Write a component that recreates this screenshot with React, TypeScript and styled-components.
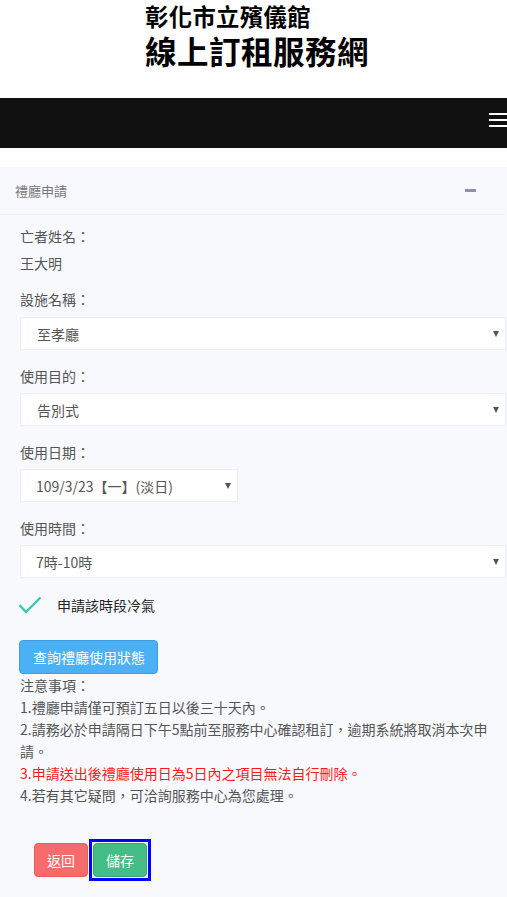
import React from "react";
import styled, { createGlobalStyle } from "styled-components";

const GlobalStyle = createGlobalStyle`
  html, body {
    margin: 0;
    padding: 0;
    background: #fff;
    font-family: "Noto Sans CJK TC", "Noto Sans", sans-serif;
  }
  * { box-sizing: border-box; }
`;

const Header = styled.header`
  height: 98px;
  padding: 1px 0 0 145px;
  background: #fff;
`;

const SiteName = styled.div`
  font-size: 23.3px;
  font-weight: 700;
  line-height: 31px;
  color: #000;
  letter-spacing: 0.4px;
`;

const SiteTitle = styled.div`
  font-size: 31.5px;
  font-weight: 700;
  line-height: 36px;
  color: #000;
  letter-spacing: 0.5px;
`;

const NavBar = styled.nav`
  height: 50px;
  background: #111;
  display: flex;
  justify-content: flex-end;
  align-items: center;
`;

const Burger = styled.div`
  width: 18px;
  display: flex;
  flex-direction: column;
  gap: 4px;
  margin-top: -7px;

  span {
    display: block;
    height: 2px;
    background: #fff;
  }
`;

const Main = styled.main`
  padding-top: 19px;
  background: #fff;
`;

const Panel = styled.section`
  background: #f7f9fd;
  min-height: 730px;
`;

const PanelHead = styled.div`
  height: 48px;
  padding: 0 29px 0 15px;
  display: flex;
  align-items: center;
  justify-content: space-between;
  border-bottom: 1px solid #eef0f5;
  margin-right: 2px;
`;

const PanelTitle = styled.span`
  font-size: 13px;
  color: #777;
`;

const Minus = styled.span`
  width: 11px;
  height: 3px;
  background: #8a93a6;
`;

const PanelBody = styled.div`
  padding: 10px 0 0 20px;
`;

const Label = styled.div<{ $gap?: number }>`
  font-size: 14px;
  line-height: 22px;
  color: #555;
  margin-bottom: ${({ $gap }) => ($gap ?? 6)}px;
`;

const Value = styled.div`
  font-size: 14px;
  line-height: 22px;
  color: #555;
  margin-bottom: 14px;
`;

const Field = styled.div`
  margin-bottom: 15px;
`;

const SelectWrap = styled.div<{ $width?: number }>`
  position: relative;
  width: ${({ $width }) => ($width ? `${$width}px` : "auto")};
  margin-right: ${({ $width }) => ($width ? "0" : "1px")};

  &::after {
    content: "";
    position: absolute;
    right: 7px;
    top: 14px;
    border-left: 3.5px solid transparent;
    border-right: 3.5px solid transparent;
    border-top: 6px solid #555;
    pointer-events: none;
  }
`;

const Select = styled.select<{ $indent?: number }>`
  appearance: none;
  width: 100%;
  height: 33px;
  padding: 0 0 0 ${({ $indent }) => $indent ?? 16}px;
  border: 1px solid #eceef2;
  background: #fff;
  font-family: inherit;
  font-size: 14px;
  color: #555;
  outline: none;
`;

const CheckRow = styled.div`
  display: flex;
  align-items: center;
  height: 22px;
  margin: 16px 0 0 -2px;

  svg {
    margin-right: 15px;
  }
`;

const CheckText = styled.span`
  font-size: 14px;
  color: #222;
`;

const QueryButton = styled.button`
  margin-top: 24px;
  height: 34px;
  padding: 0 12px 0 13px;
  border: 1px solid #3d9fe2;
  border-radius: 4px;
  background: #4bb1f4;
  color: #fff;
  font-family: inherit;
  font-size: 14px;
  display: block;
  margin-left: -1px;
`;

const Notes = styled.div`
  font-size: 14px;
  line-height: 22px;
  color: #555;
`;

const NoteLine = styled.div<{ $alert?: boolean }>`
  color: ${({ $alert }) => ($alert ? "#ff1a1a" : "#555")};
  padding-right: 14px;
`;

const Actions = styled.div`
  display: flex;
  gap: 5px;
  padding: 37px 0 0 14px;
`;

const ActionButton = styled.button<{ $tone: "danger" | "success"; $focused?: boolean }>`
  position: relative;
  width: 54px;
  height: 34px;
  border-radius: 4px;
  border: 1px solid ${({ $tone }) => ($tone === "danger" ? "#ee5b5b" : "#2fa872")};
  background: ${({ $tone }) => ($tone === "danger" ? "#f66b6b" : "#44bd87")};
  color: #fff;
  font-family: inherit;
  font-size: 14px;
  outline: none;

  &::after {
    content: "";
    display: ${({ $focused }) => ($focused ? "block" : "none")};
    position: absolute;
    inset: -5px;
    border: 3px solid #0000ff;
    pointer-events: none;
  }
`;

const Check = () => (
  <svg width="24" height="18" viewBox="0 0 24 18">
    <polyline points="1.5,9 8,16 22.5,1.5" fill="none" stroke="#3cc8b6" strokeWidth="2.4" />
  </svg>
);

const App: React.FC = () => {
  return (
    <>
      <GlobalStyle />
      <Header>
        <SiteName>彰化市立殯儀館</SiteName>
        <SiteTitle>線上訂租服務網</SiteTitle>
      </Header>
      <NavBar>
        <Burger>
          <span />
          <span />
          <span />
        </Burger>
      </NavBar>
      <Main>
        <Panel>
          <PanelHead>
            <PanelTitle>禮廳申請</PanelTitle>
            <Minus />
          </PanelHead>
          <PanelBody>
            <Label $gap={5}>亡者姓名：</Label>
            <Value>王大明</Value>

            <Field>
              <Label $gap={7}>設施名稱：</Label>
              <SelectWrap>
                <Select defaultValue="至孝廳">
                  <option>至孝廳</option>
                </Select>
              </SelectWrap>
            </Field>

            <Field>
              <Label>使用目的：</Label>
              <SelectWrap>
                <Select defaultValue="告別式">
                  <option>告別式</option>
                </Select>
              </SelectWrap>
            </Field>

            <Field>
              <Label>使用日期：</Label>
              <SelectWrap $width={218}>
                <Select $indent={15} defaultValue="d">
                  <option value="d">109/3/23【一】(淡日)</option>
                </Select>
              </SelectWrap>
            </Field>

            <Label>使用時間：</Label>
            <SelectWrap>
              <Select $indent={15} defaultValue="t">
                <option value="t">7時-10時</option>
              </Select>
            </SelectWrap>

            <CheckRow>
              <Check />
              <CheckText>申請該時段冷氣</CheckText>
            </CheckRow>

            <QueryButton>查詢禮廳使用狀態</QueryButton>

            <Notes>
              <NoteLine>注意事項：</NoteLine>
              <NoteLine>1.禮廳申請僅可預訂五日以後三十天內。</NoteLine>
              <NoteLine>2.請務必於申請隔日下午5點前至服務中心確認租訂，逾期系統將取消本次申請。</NoteLine>
              <NoteLine $alert>3.申請送出後禮廳使用日為5日內之項目無法自行刪除。</NoteLine>
              <NoteLine>4.若有其它疑問，可洽詢服務中心為您處理。</NoteLine>
            </Notes>

            <Actions>
              <ActionButton $tone="danger">返回</ActionButton>
              <ActionButton $tone="success" $focused>儲存</ActionButton>
            </Actions>
          </PanelBody>
        </Panel>
      </Main>
    </>
  );
};

export default App;
